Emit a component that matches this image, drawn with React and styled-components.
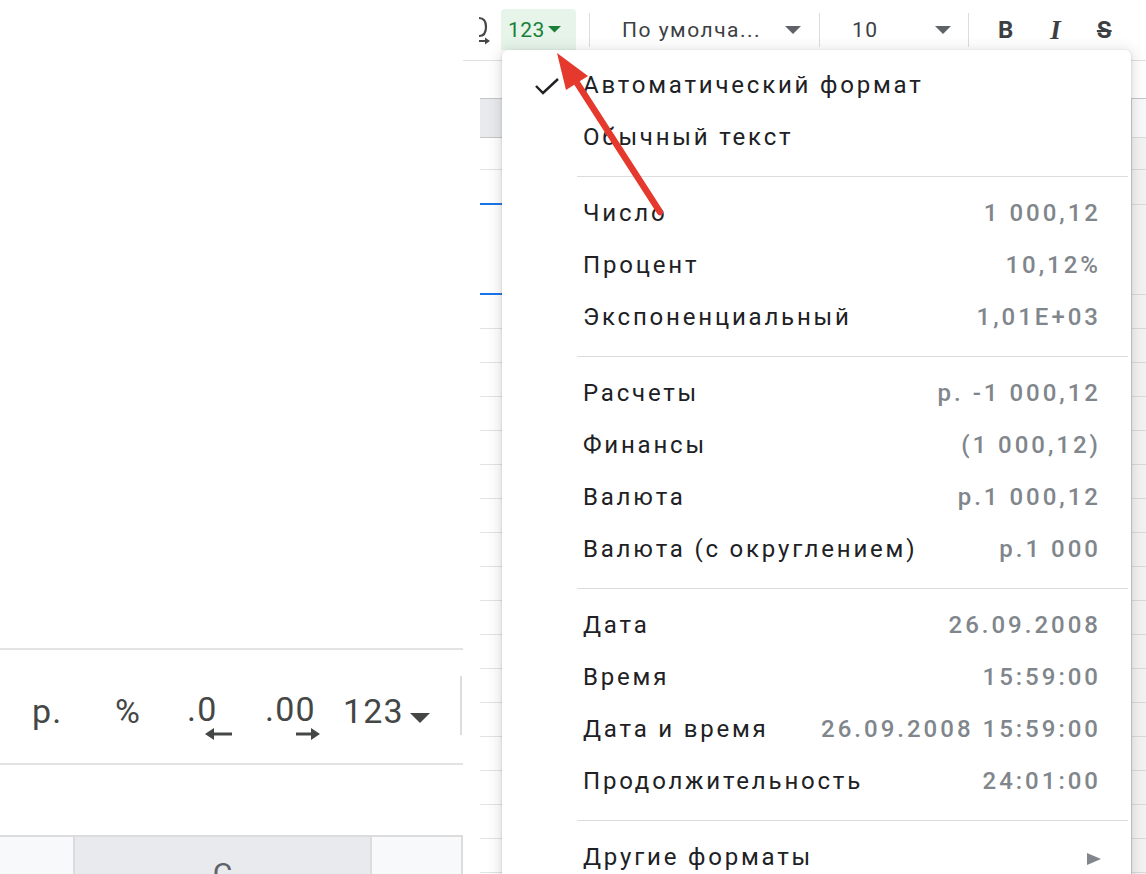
import React from "react";
import styled, { createGlobalStyle } from "styled-components";

const GlobalStyle = createGlobalStyle`
  html, body { margin: 0; padding: 0; background: #fff; }
  body { font-family: Roboto, "Noto Sans", Arial, sans-serif; color: #202124; }
  * { box-sizing: border-box; }
`;

const Page = styled.div`
  position: relative;
  width: 1146px;
  height: 874px;
  overflow: hidden;
  display: flex;
  background: #fff;
`;

/* ---------- left: zoomed crop of the toolbar ---------- */

const LeftPane = styled.div`
  width: 463px;
  flex-shrink: 0;
  display: flex;
  flex-direction: column;
`;

const Blank = styled.div`
  flex: 1;
`;

const BigToolbar = styled.div`
  height: 117px;
  border-top: 2px solid #e3e3e3;
  border-bottom: 2px solid #e3e3e3;
  display: flex;
  align-items: center;
  padding: 8px 0 0 32px;
  font-size: 34px;
  letter-spacing: 1.2px;
  color: #444746;
`;

const BigButton = styled.div`
  width: ${(p) => p.w}px;
  flex-shrink: 0;
  display: flex;
  align-items: center;
`;

const DecimalIcon = styled.div`
  display: flex;
  flex-direction: column;
  align-items: flex-start;
  line-height: 1;
  margin-top: 12px;

  svg {
    margin-left: ${(p) => p.arrowAt}px;
    margin-top: 1px;
  }
`;

const BigSep = styled.div`
  width: 2px;
  height: 59px;
  background: #dadce0;
  margin-top: -10px;
`;

const BlankGap = styled.div`
  height: 70px;
`;

const BigHeader = styled.div`
  height: 39px;
  display: flex;
  border-top: 2px solid #dcdcdc;
  background: #f8f9fa;
`;

const HeadCell = styled.div`
  width: ${(p) => (p.w ? `${p.w}px` : "auto")};
  flex: ${(p) => (p.w ? "none" : 1)};
  background: ${(p) => (p.active ? "#e8eaed" : "#f8f9fa")};
  border-right: 2px solid #dcdcdc;
  text-align: center;
  font-size: 30px;
  line-height: 30px;
  padding-top: 22px;
  color: #5f6368;
  overflow: hidden;
`;

/* ---------- right: sheet with the format menu ---------- */

const RightPane = styled.div`
  flex: 1;
  display: flex;
  flex-direction: column;
`;

const TopBar = styled.div`
  height: 61px;
  flex-shrink: 0;
  border-bottom: 1px solid #e0e0e0;
  display: flex;
  align-items: center;
  font-size: 21px;
  letter-spacing: 1.5px;
  color: #3c4043;
`;

const ClipIcon = styled.svg`
  margin-left: 10px;
  flex-shrink: 0;
`;

const FormatButton = styled.div`
  align-self: flex-start;
  margin: 9px 0 0 10px;
  width: 75px;
  height: 41px;
  padding-left: 7px;
  border-radius: 4px 4px 0 0;
  background: #e6f4ea;
  color: #188038;
  display: flex;
  align-items: center;
  gap: 3px;
  letter-spacing: 0.5px;
`;

const BarSep = styled.div`
  width: 1px;
  height: 34px;
  background: #dadce0;
  margin-left: ${(p) => p.ml}px;
`;

const Select = styled.div`
  margin-left: 32px;
  width: ${(p) => p.w}px;
  display: flex;
  align-items: center;
  justify-content: space-between;
  padding-right: 5px;
`;

const StyleBtn = styled.div`
  margin-left: ${(p) => p.ml}px;
  font-size: 24px;
  color: #3c4043;
  letter-spacing: 0;
`;

const BoldText = styled.span`
  font-weight: 700;
`;

const ItalicText = styled.span`
  font-family: "Liberation Serif", serif;
  font-style: italic;
  font-weight: 700;
  font-size: 27px;
`;

const StrikeText = styled.span`
  font-weight: 700;
  text-decoration: line-through;
  text-decoration-thickness: 2px;
`;

const Sheet = styled.div`
  flex: 1;
  display: flex;
  flex-direction: column;
  padding-top: 37px;
`;

const Row = styled.div`
  height: ${(p) => p.h}px;
  flex-shrink: 0;
  display: flex;
  margin-left: 17px;
  border-top: ${(p) => (p.header ? "1px solid #c4c7c5" : "none")};
`;

const MainCell = styled.div`
  flex: 1;
  background: ${(p) => (p.header ? "#e8eaed" : "#fff")};
  border-bottom: ${(p) => (p.blue ? "2px solid #1a73e8" : p.header ? "1px solid #c4c7c5" : "1px solid #e2e3e3")};
`;

const EdgeCell = styled.div`
  width: 15px;
  background: ${(p) => (p.header ? "#f8f9fa" : "#f3f3f3")};
  border-left: 1px solid #d6d6d6;
  border-bottom: 1px solid #dadada;
`;

/* ---------- the dropdown menu ---------- */

const Menu = styled.div`
  position: absolute;
  left: 502px;
  top: 50px;
  width: 629px;
  height: 880px;
  padding-top: 9px;
  background: #fff;
  border-radius: 6px;
  box-shadow: 0 2px 14px 2px rgba(60, 64, 67, 0.16), 0 1px 3px rgba(60, 64, 67, 0.2);
  z-index: 2;
`;

const MenuItem = styled.div`
  position: relative;
  height: 52px;
  display: flex;
  align-items: center;
  padding: 0 33px 0 81px;
  font-size: 24px;
  letter-spacing: 2.8px;
`;

const ItemLabel = styled.span`
  color: #202124;
`;

const ItemValue = styled.span`
  margin-left: auto;
  margin-right: -3px;
  color: #80868b;
  font-weight: 500;
  letter-spacing: 3px;
`;

const CheckMark = styled.svg`
  position: absolute;
  left: 32px;
  top: 18px;
`;

const MenuSep = styled.div`
  height: 1px;
  background: #dadce0;
  margin: 13px 3px 10px 75px;
`;

const Overlay = styled.svg`
  position: absolute;
  left: 0;
  top: 0;
  z-index: 3;
  pointer-events: none;
`;

const sections = [
  [{ label: "Автоматический формат", checked: true }, { label: "Обычный текст" }],
  [
    { label: "Число", value: "1 000,12" },
    { label: "Процент", value: "10,12%" },
    { label: "Экспоненциальный", value: "1,01E+03" },
  ],
  [
    { label: "Расчеты", value: "р. -1 000,12" },
    { label: "Финансы", value: "(1 000,12)" },
    { label: "Валюта", value: "р.1 000,12" },
    { label: "Валюта (с округлением)", value: "р.1 000" },
  ],
  [
    { label: "Дата", value: "26.09.2008" },
    { label: "Время", value: "15:59:00" },
    { label: "Дата и время", value: "26.09.2008 15:59:00" },
    { label: "Продолжительность", value: "24:01:00" },
  ],
  [{ label: "Другие форматы", submenu: true }],
];

// row heights of the sheet below the toolbar; blue marks the selection edges
const rows = [
  { h: 40, header: true },
  { h: 32 },
  { h: 35, blue: true },
  { h: 90, blue: true },
  ...Array.from({ length: 18 }, () => ({ h: 34 })),
];

const Caret = ({ size = 14, color = "#5f6368" }) => (
  <svg width={size} height={size / 2} viewBox="0 0 10 5">
    <path d="M0 0 L10 0 L5 5 Z" fill={color} />
  </svg>
);

const ArrowLeft = () => (
  <svg width="28" height="14" viewBox="0 0 28 14">
    <path d="M6 7 H27" stroke="#444746" strokeWidth="3" />
    <path d="M0 7 L9 1 L9 13 Z" fill="#444746" />
  </svg>
);

const ArrowRight = () => (
  <svg width="24" height="14" viewBox="0 0 24 14">
    <path d="M0 7 H18" stroke="#444746" strokeWidth="3" />
    <path d="M24 7 L15 1 L15 13 Z" fill="#444746" />
  </svg>
);

export default function App() {
  return (
    <Page>
      <GlobalStyle />

      <LeftPane>
        <Blank />
        <BigToolbar>
          <BigButton w={83}>р.</BigButton>
          <BigButton w={72}>%</BigButton>
          <BigButton w={78}>
            <DecimalIcon arrowAt={18}>
              <span>.0</span>
              <ArrowLeft />
            </DecimalIcon>
          </BigButton>
          <BigButton w={78}>
            <DecimalIcon arrowAt={31}>
              <span>.00</span>
              <ArrowRight />
            </DecimalIcon>
          </BigButton>
          <BigButton w={117}>
            123
            <span style={{ marginLeft: 6 }}>
              <Caret size={20} color="#444746" />
            </span>
          </BigButton>
          <BigSep />
        </BigToolbar>
        <BlankGap />
        <BigHeader>
          <HeadCell w={75} />
          <HeadCell w={297} active>
            C
          </HeadCell>
          <HeadCell />
        </BigHeader>
      </LeftPane>

      <RightPane>
        <TopBar>
          {/* right edge of the "increase decimals" icon, cut by the crop */}
          <ClipIcon width="18" height="32" viewBox="0 0 18 32">
            <path d="M6 4 C12 4 13 9 13 13 C13 17 12 22 6 22" fill="none" stroke="#444746" strokeWidth="2.2" />
            <path d="M6 27 H14" stroke="#444746" strokeWidth="2" />
            <path d="M17 27 L12 23.5 L12 30.5 Z" fill="#444746" />
          </ClipIcon>
          <FormatButton>
            123
            <Caret size={13} color="#188038" />
          </FormatButton>
          <BarSep ml={13} />
          <Select w={184}>
            <span>По умолча...</span>
            <Caret size={16} />
          </Select>
          <BarSep ml={13} />
          <Select w={104}>
            <span>10</span>
            <Caret size={16} />
          </Select>
          <BarSep ml={12} />
          <StyleBtn ml={29}>
            <BoldText>B</BoldText>
          </StyleBtn>
          <StyleBtn ml={37}>
            <ItalicText>I</ItalicText>
          </StyleBtn>
          <StyleBtn ml={36}>
            <StrikeText>S</StrikeText>
          </StyleBtn>
        </TopBar>

        <Sheet>
          {rows.map((r, i) => (
            <Row key={i} h={r.h} header={r.header}>
              <MainCell header={r.header} blue={r.blue} />
              <EdgeCell header={r.header} />
            </Row>
          ))}
        </Sheet>
      </RightPane>

      <Menu>
        {sections.map((items, si) => (
          <React.Fragment key={si}>
            {si > 0 && <MenuSep />}
            {items.map((it) => (
              <MenuItem key={it.label}>
                {it.checked && (
                  <CheckMark width="26" height="18" viewBox="0 0 26 18">
                    <path d="M2 9 L9 16 L24 2" fill="none" stroke="#202124" strokeWidth="2.4" />
                  </CheckMark>
                )}
                <ItemLabel>{it.label}</ItemLabel>
                {it.value && <ItemValue>{it.value}</ItemValue>}
                {it.submenu && (
                  <ItemValue>
                    <svg width="14" height="12" viewBox="0 0 14 12">
                      <path d="M0 0 L14 6 L0 12 Z" fill="#80868b" />
                    </svg>
                  </ItemValue>
                )}
              </MenuItem>
            ))}
          </React.Fragment>
        ))}
      </Menu>

      {/* red annotation arrow pointing at the 123 button */}
      <Overlay width="1146" height="874">
        <path d="M660 212 L577 83" stroke="#e5392d" strokeWidth="6.5" strokeLinecap="round" />
        <path d="M557 53 L588 76 L566 90 Z" fill="#e5392d" />
      </Overlay>
    </Page>
  );
}
